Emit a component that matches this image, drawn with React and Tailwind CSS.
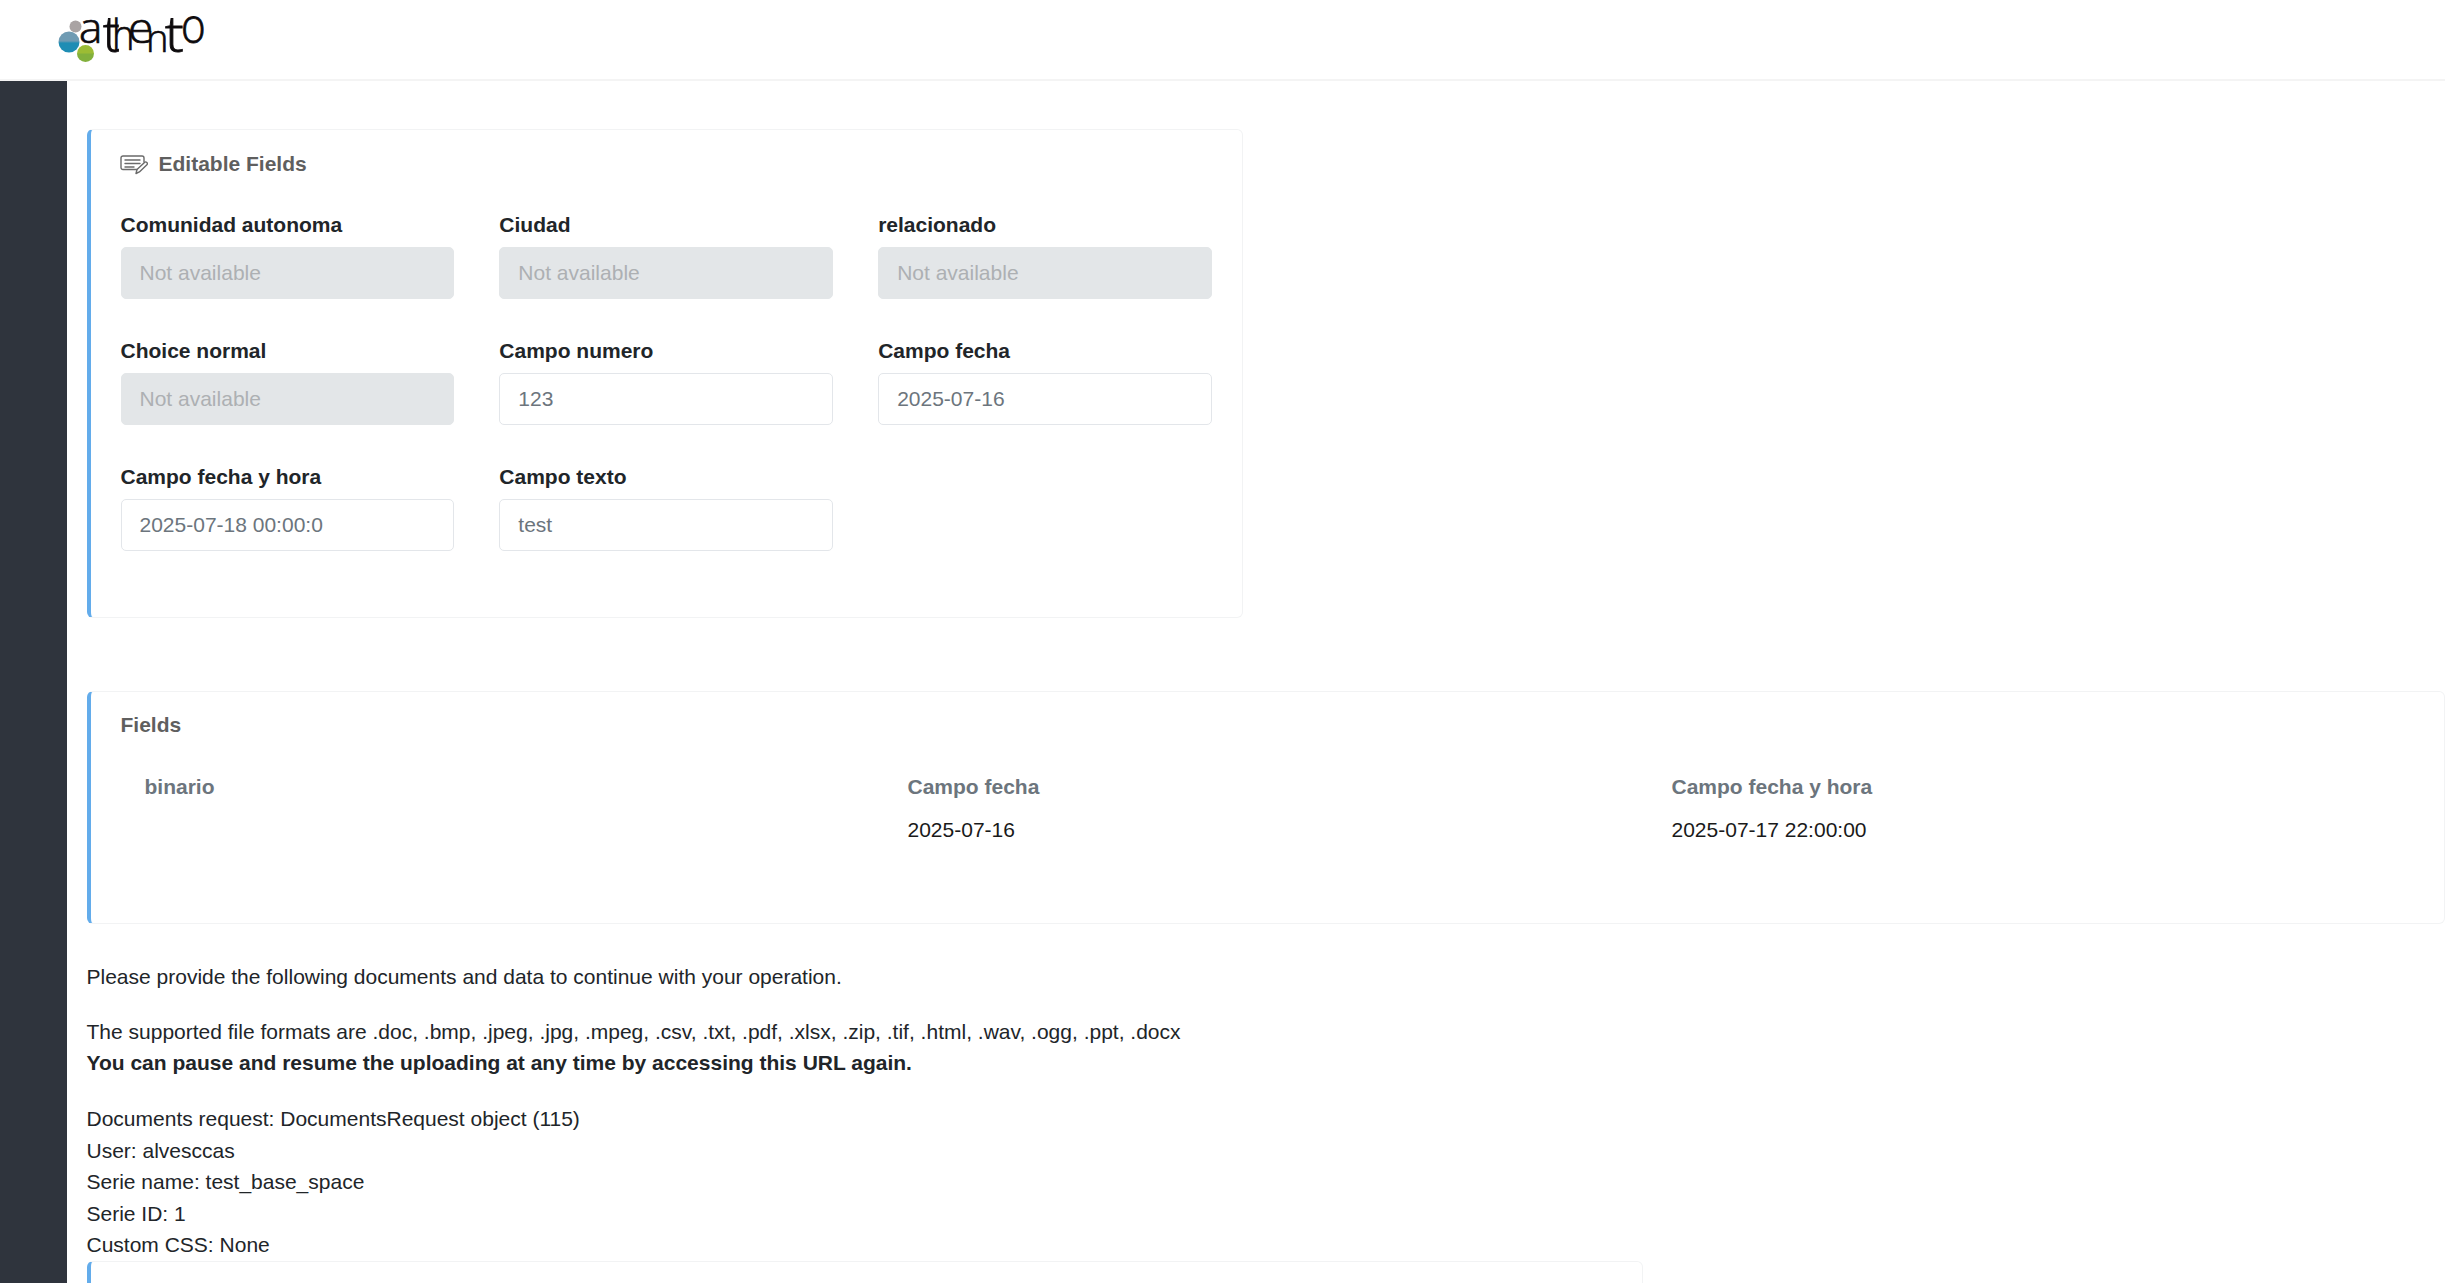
const editable = [
  { label: "Comunidad autonoma", placeholder: "Not available" },
  { label: "Ciudad", placeholder: "Not available" },
  { label: "relacionado", placeholder: "Not available" },
  { label: "Choice normal", placeholder: "Not available" },
  { label: "Campo numero", value: "123" },
  { label: "Campo fecha", value: "2025-07-16" },
  { label: "Campo fecha y hora", value: "2025-07-18 00:00:0" },
  { label: "Campo texto", value: "test" },
]

const fields = [
  { label: "binario", value: "", className: "w-[787px] pl-6" },
  { label: "Campo fecha", value: "2025-07-16", className: "w-[764px]" },
  { label: "Campo fecha y hora", value: "2025-07-17 22:00:00", className: "" },
]

// logo letters: x, baseline, x scale, y scale (the wordmark sits on two baselines)
const logoLetters = [
  ["a", 21, 43, 1.1, 1.05],
  ["t", 45, 52, 1.25, 1.25],
  ["h", 54, 50, 0.95, 1.05],
  ["e", 70, 43, 1.15, 1.05],
  ["n", 88, 52, 0.95, 0.95],
  ["t", 107, 52, 1.4, 1.25],
  ["o", 123, 43, 1.05, 1.2],
]

function Logo() {
  return (
    <svg width="160" height="80" viewBox="0 0 160 80" className="ml-[58px]">
      <defs>
        <linearGradient id="blue" x1="0" y1="0" x2="0" y2="1">
          <stop offset="0.45" stopColor="#6f9bb3" />
          <stop offset="0.55" stopColor="#1e8db4" />
        </linearGradient>
        <linearGradient id="green" x1="0" y1="0" x2="0" y2="1">
          <stop offset="0.45" stopColor="#9cbc34" />
          <stop offset="0.55" stopColor="#82b03c" />
        </linearGradient>
      </defs>
      <circle cx="17.5" cy="26.5" r="6" fill="#a9a3a3" />
      <circle cx="11" cy="42" r="10.5" fill="url(#blue)" />
      <circle cx="27.5" cy="53.5" r="8.5" fill="url(#green)" />
      <g fill="#0d0a0c" stroke="#0d0a0c" strokeWidth="0.7" fontFamily="'Open Sans', sans-serif" fontWeight="300" fontSize="40">
        {logoLetters.map(([ch, x, y, sx, sy], i) => (
          <text key={i} transform={`translate(${x} ${y}) scale(${sx} ${sy})`}>
            {ch}
          </text>
        ))}
      </g>
    </svg>
  )
}

function EditIcon() {
  return (
    <svg width="28" height="20" viewBox="0 0 28 20" fill="none" stroke="#6a6a6a" strokeWidth="1.4" className="mr-[11px] -ml-px mt-px">
      <path d="M17 14.5H3a2 2 0 0 1-2-2V3a2 2 0 0 1 2-2h19a2 2 0 0 1 2 2v4" strokeLinecap="round" />
      <path d="M5 5h15M5 8.5h15M5 12h9" strokeLinecap="round" />
      <path d="M16 18.5l1-4 7.5-7a1.6 1.6 0 0 1 2.4 2.2l-7.5 7.2z" strokeLinejoin="round" />
    </svg>
  )
}

function Field({ label, value, placeholder }) {
  return (
    <div className="h-[126px]">
      <div className="h-[31.5px] mb-[6px] font-bold text-[#212529]">{label}</div>
      <div
        className={`h-[52px] rounded-[5px] border px-[18px] flex items-center ${
          placeholder ? "bg-[#e3e6e8] border-[#e3e6e8] text-[#adb0b3]" : "bg-white border-[#e3e6ea] text-[#6c757d]"
        }`}
      >
        {placeholder || value}
      </div>
    </div>
  )
}

function Card({ className, children }) {
  return (
    <div className={`border border-[#f2f3f4] border-l-4 border-l-[#63aceb] rounded-[6px] ${className}`}>{children}</div>
  )
}

export default function App() {
  return (
    <div className="h-[1283px] overflow-hidden bg-white text-[21px] leading-[31.5px] text-[#212529] font-['Liberation_Sans',sans-serif]">
      {/* Header */}
      <div className="h-[81px] border-b-2 border-[#f4f4f4] overflow-hidden">
        <Logo />
      </div>

      <div className="flex h-[1202px]">
        <div className="w-[67px] shrink-0 bg-[#2f343d]"></div>

        <div className="flex-1 min-w-0 pl-[20px] pt-[48px]">
          {/* Editable fields */}
          <Card className="w-[1156px] h-[489px] pt-[18px] pl-[29.5px] pr-[30px]">
            <div className="h-[32px] flex items-center font-bold text-[#5f5f5f]">
              <EditIcon />
              Editable Fields
            </div>
            <div className="mt-[29px] grid grid-cols-3 gap-x-[45px]">
              {editable.map((f) => (
                <Field key={f.label} {...f} />
              ))}
            </div>
          </Card>

          {/* Fields */}
          <Card className="mt-[73px] h-[233px] pt-[17px] pl-[29.5px]">
            <div className="h-[32px] font-bold text-[#5f5f5f]">Fields</div>
            <div className="mt-[30px] flex">
              {fields.map((f) => (
                <div key={f.label} className={f.className}>
                  <div className="h-[43px] font-bold text-[#6c757d]">{f.label}</div>
                  <div className="h-[32px] text-[#1a1a1a]">{f.value}</div>
                </div>
              ))}
            </div>
          </Card>

          <p className="mt-[37px] -ml-[0.5px]">Please provide the following documents and data to continue with your operation.</p>
          <p className="mt-[23px] -ml-[0.5px]">
            The supported file formats are .doc, .bmp, .jpeg, .jpg, .mpeg, .csv, .txt, .pdf, .xlsx, .zip, .tif, .html, .wav, .ogg, .ppt, .docx
            <br />
            <b>You can pause and resume the uploading at any time by accessing this URL again.</b>
          </p>
          <p className="mt-[24.5px] -ml-[0.5px]">
            Documents request: DocumentsRequest object (115)
            <br />
            User: alvesccas
            <br />
            Serie name: test_base_space
            <br />
            Serie ID: 1
            <br />
            Custom CSS: None
          </p>

          <Card className="mt-[0.5px] w-[1556px] h-[60px]"></Card>
        </div>
      </div>
    </div>
  )
}
